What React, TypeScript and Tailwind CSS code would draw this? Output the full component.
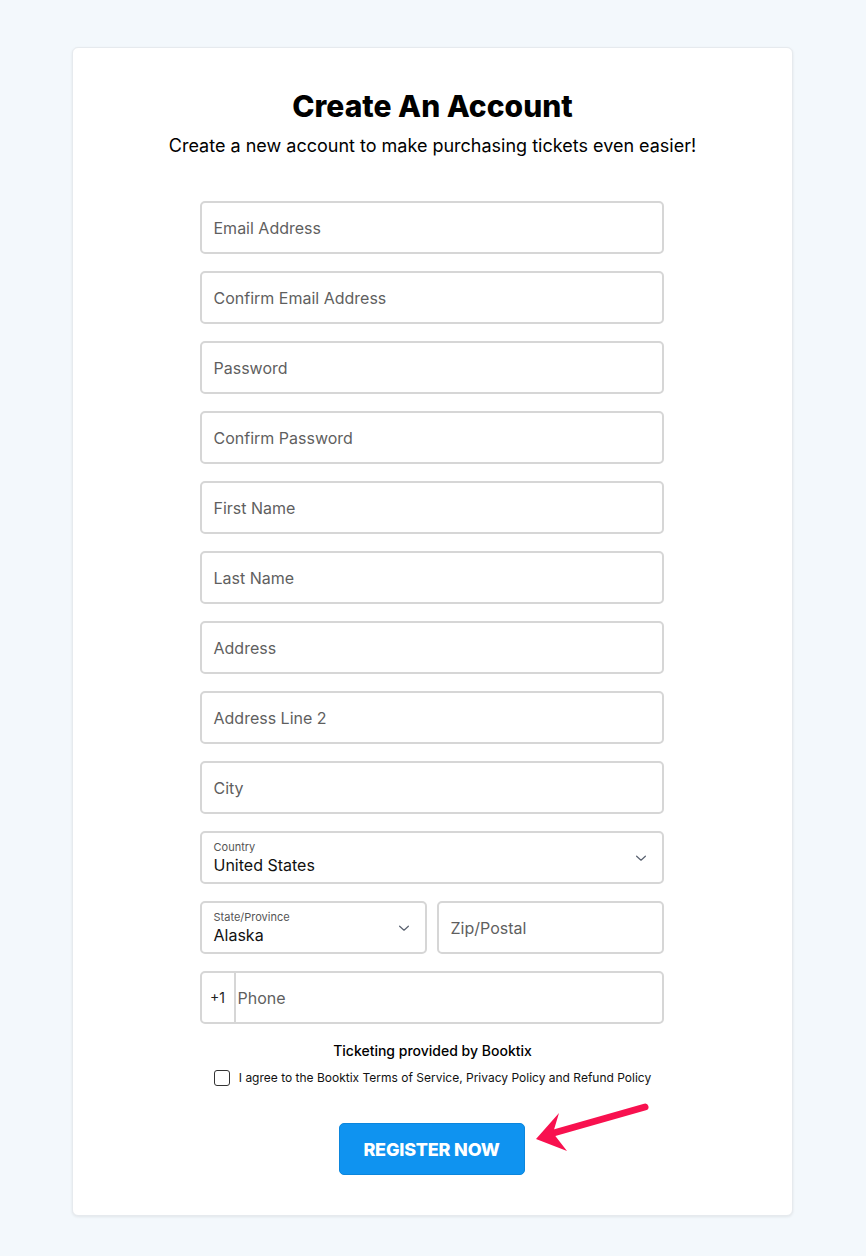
import React from 'react';

const fields = [
  'Email Address',
  'Confirm Email Address',
  'Password',
  'Confirm Password',
  'First Name',
  'Last Name',
  'Address',
  'Address Line 2',
  'City',
];

const Chevron = () => (
  <svg className="w-[14px] h-[14px] text-[#5a6270]" viewBox="0 0 16 16" fill="none" stroke="currentColor" strokeWidth="1.4">
    <path d="M3 6l5 4.5L13 6" strokeLinecap="round" strokeLinejoin="round" />
  </svg>
);

const TextField: React.FC<{ label: string; className?: string }> = ({ label, className }) => (
  <div className={`h-[53px] border-2 border-[#d6d6d6] rounded-[5px] flex items-center px-[12px] text-[16px] text-[#5f5f5f] ${className ?? ''}`}>
    {label}
  </div>
);

const SelectField: React.FC<{ label: string; value: string; className?: string }> = ({ label, value, className }) => (
  <div className={`h-[53px] border-2 border-[#d6d6d6] rounded-[5px] flex items-center justify-between pl-[12px] pr-[14px] ${className ?? ''}`}>
    <div className="flex flex-col pt-[2px]">
      <span className="text-[11px] leading-[13px] text-[#555]">{label}</span>
      <span className="text-[16px] leading-[22px] text-[#111]">{value}</span>
    </div>
    <Chevron />
  </div>
);

export default function App() {
  return (
    <div className="min-h-[1256px] bg-[#f3f8fc] pt-[47px] pb-[42px] font-['Inter','Noto_Sans',sans-serif]">
      <div className="relative ml-[72px] w-[721px] bg-white rounded-[6px] border border-[#e6eaee] shadow-[0_1px_3px_rgba(0,0,0,0.08)] pt-[40px] pb-[40px] flex flex-col items-center">
        <h1 className="text-[30px] leading-[36px] font-extrabold text-black">Create An Account</h1>
        <p className="mt-[8px] text-[18px] leading-[28px] text-black">Create a new account to make purchasing tickets even easier!</p>

        <div className="mt-[41px] mr-[2px] w-[464px] flex flex-col gap-[17px]">
          {fields.map((f) => (
            <TextField key={f} label={f} />
          ))}
          <SelectField label="Country" value="United States" />
          <div className="flex gap-[10px]">
            <SelectField label="State/Province" value="Alaska" className="w-[227px]" />
            <TextField label="Zip/Postal" className="flex-1" />
          </div>
          <div className="h-[53px] border-2 border-[#d6d6d6] rounded-[5px] flex items-stretch text-[16px]">
            <div className="w-[34px] flex items-center justify-center border-r-2 border-[#d6d6d6] text-[14px] text-[#222]">+1</div>
            <div className="flex items-center pl-[2px] text-[#5f5f5f]">Phone</div>
          </div>
        </div>

        <div className="mt-[17px] text-[14px] leading-[20px] font-medium text-black">Ticketing provided by Booktix</div>
        <label className="mt-[7px] flex items-center gap-[9px] text-[12px] leading-[20px] text-[#111]">
          <span className="w-[16px] h-[16px] border-[1.5px] border-[#333] rounded-[3px] bg-white" />
          I agree to the Booktix Terms of Service, Privacy Policy and Refund Policy
        </label>

        <button className="mt-[35px] mr-[2px] w-[186px] h-[52px] rounded-[5px] bg-[#0f93f0] border border-[#0b86dd] text-white text-[18px] font-extrabold tracking-[-0.2px]">
          REGISTER NOW
        </button>

        {/* annotation arrow */}
        <svg className="absolute left-[455px] top-[1050px] w-[140px] h-[60px] pointer-events-none" viewBox="0 0 140 60">
          <path d="M117 9 L22 36" stroke="#f8114f" strokeWidth="7" strokeLinecap="round" />
          <path d="M8 41 L31 15 L25 35 L39 53 Z" fill="#f8114f" />
        </svg>
      </div>
    </div>
  );
}
